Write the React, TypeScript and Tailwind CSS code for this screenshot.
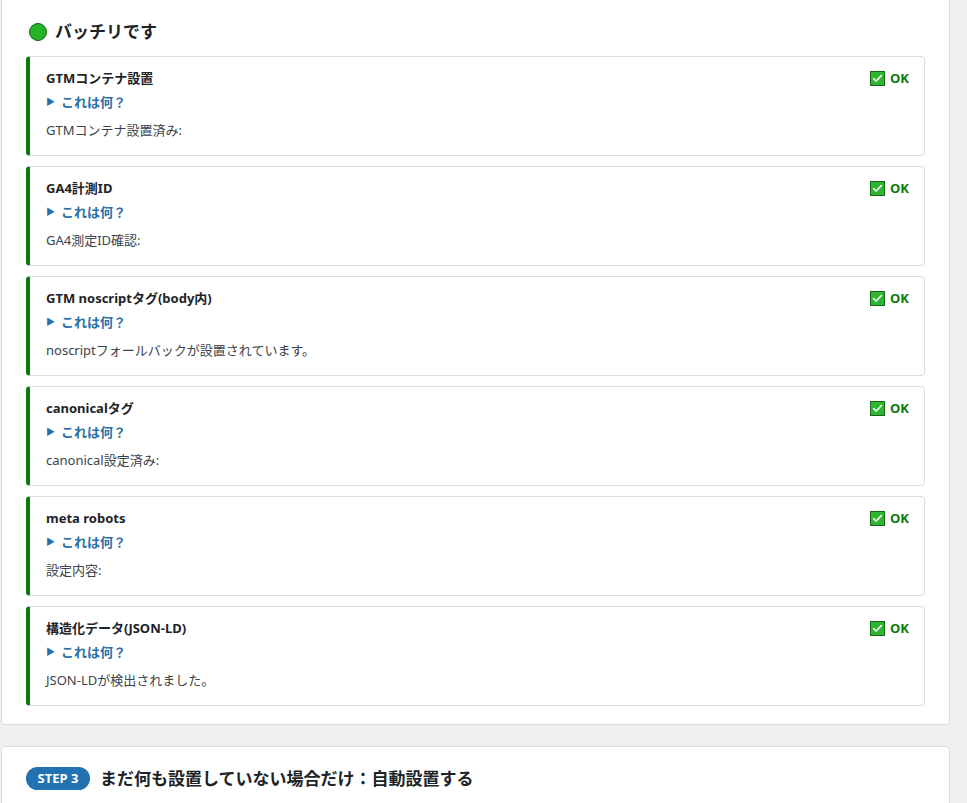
import React from "react";

const items = [
  { title: "GTMコンテナ設置", body: "GTMコンテナ設置済み:" },
  { title: "GA4計測ID", body: "GA4測定ID確認:" },
  { title: "GTM noscriptタグ(body内)", body: "noscriptフォールバックが設置されています。" },
  { title: "canonicalタグ", body: "canonical設定済み:" },
  { title: "meta robots", body: "設定内容:" },
  { title: "構造化データ(JSON-LD)", body: "JSON-LDが検出されました。" },
];

function CheckIcon() {
  return (
    <svg width="15" height="15" viewBox="0 0 15 15" className="shrink-0">
      <rect x="0.5" y="0.5" width="14" height="14" fill="#2fb52f" stroke="#17661a" />
      <path d="M3.6 7.6 L6.2 10.1 L11.4 4.6" fill="none" stroke="#ffffff" strokeWidth="1.5" strokeLinecap="round" strokeLinejoin="round" />
    </svg>
  );
}

export default function App() {
  return (
    <div
      className="min-h-[803px] bg-[#f0f0f0] pl-[1px] pr-[17px] overflow-hidden"
      style={{ fontFamily: '"Noto Sans", "Noto Sans CJK JP", sans-serif' }}
    >
      <div className="-mt-[10px] bg-white border border-[#dcdcde] rounded-[4px] px-6 pt-[30px] pb-[18px]">
        <div className="flex items-center gap-[8px] h-[22px] mb-[13px] pl-[3px]">
          <span className="w-[18px] h-[18px] rounded-full bg-[#22b422] border-[1.5px] border-[#155e15] shrink-0" />
          <h2 className="text-[17px] font-bold text-[#1d2327] leading-[22px]">バッチリです</h2>
        </div>
        <div className="flex flex-col gap-[10px]">
          {items.map((it) => (
            <div
              key={it.title}
              className="h-[100px] bg-white border border-[#dcdcde] border-l-4 border-l-[#0b7a0b] rounded-[4px] pl-4 pr-4 pt-[11px]"
            >
              <div className="flex items-center justify-between h-[20px]">
                <div className="text-[13px] font-bold text-[#1d2327] leading-[20px]">{it.title}</div>
                <div className="flex items-center gap-[5px] pl-[2px]">
                  <CheckIcon />
                  <span className="text-[13px] font-bold text-[#0b7a0b] leading-[20px] mr-[-1px]">OK</span>
                </div>
              </div>
              <div className="mt-[4px] flex items-center gap-[6px] h-[20px] text-[13px] font-bold text-[#2a6fa5] leading-[20px]">
                <span className="text-[9px]">▶</span>
                <span>これは何？</span>
              </div>
              <div className="mt-[8px] text-[13px] text-[#3c434a] leading-[20px]">{it.body}</div>
            </div>
          ))}
        </div>
      </div>
      <div className="mt-[21px] bg-white border border-[#dcdcde] rounded-[4px] px-6 pt-[19px] pb-6">
        <div className="flex items-center gap-[10px] h-[25px]">
          <span className="inline-flex items-center justify-center h-[23px] w-[64px] rounded-full bg-[#2271b1] text-white text-[13px] font-bold leading-none">
            STEP 3
          </span>
          <h3 className="text-[17px] font-bold text-[#1d2327] leading-[22px]">まだ何も設置していない場合だけ：自動設置する</h3>
        </div>
      </div>
    </div>
  );
}
